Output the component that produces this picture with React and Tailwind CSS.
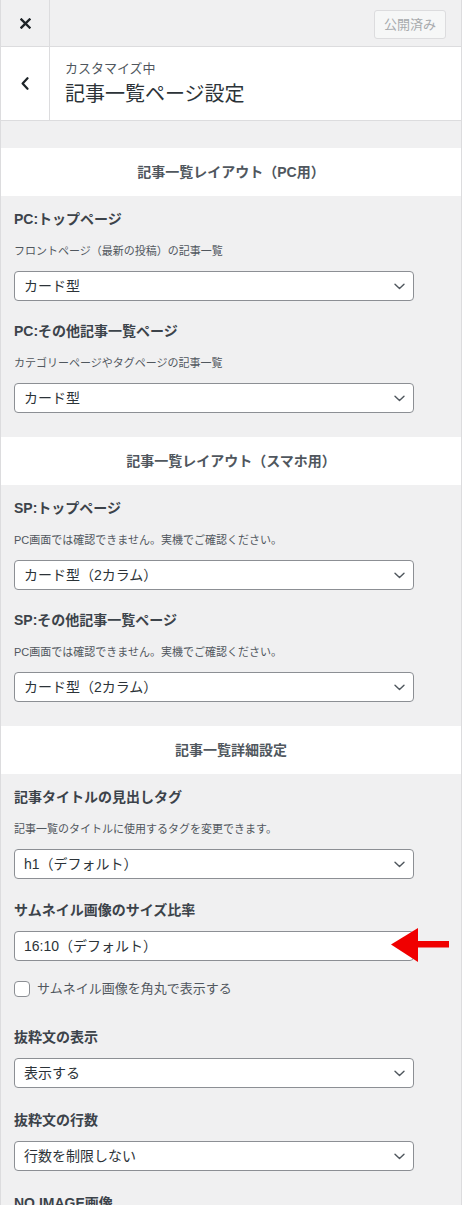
import React from "react";

const FONT = { fontFamily: '"Liberation Sans", "Noto Sans CJK JP", sans-serif' };

function Chevron() {
  return (
    <svg width="11" height="7" viewBox="0 0 11 7" fill="none">
      <path d="M1 1.2 L5.5 5.6 L10 1.2" stroke="#50575e" strokeWidth="1.4" strokeLinecap="round" strokeLinejoin="round" />
    </svg>
  );
}

function Select({ value, chevron = true }) {
  return (
    <div className="w-[400px] h-[30px] bg-white border border-[#8c8f94] rounded-[4px] flex items-center justify-between pl-[9px] pr-[8px] text-[14px] text-[#2c3338]">
      <span className="leading-[20px]">{value}</span>
      {chevron && <Chevron />}
    </div>
  );
}

function Label({ children }) {
  return <div className="h-[24px] leading-[24px] text-[14px] font-bold text-[#3c434a]">{children}</div>;
}

function Desc({ children }) {
  return <div className="mt-[11px] h-[18px] leading-[18px] text-[11px] text-[#50575e]">{children}</div>;
}

function Control({ label, desc, value, className = "" }) {
  return (
    <div className={className}>
      <Label>{label}</Label>
      {desc ? <Desc>{desc}</Desc> : null}
      <div className={desc ? "mt-[11px]" : "mt-[9px]"}>
        <Select value={value} />
      </div>
    </div>
  );
}

function Band({ children }) {
  return (
    <div className="h-[48px] bg-white flex items-center justify-center text-[14px] font-bold text-[#50575e]">
      {children}
    </div>
  );
}

export default function App() {
  return (
    <div className="w-[462px] min-h-[1205px] bg-[#f0f0f1] border-x border-[#dcdcde] overflow-hidden" style={FONT}>
      {/* top header */}
      <div className="h-[47px] flex border-b border-[#dcdcde]">
        <div className="w-[49px] border-r border-[#dcdcde] flex items-center justify-center">
          <svg width="11" height="11" viewBox="0 0 11 11">
            <path d="M1.5 1.5 L9.5 9.5 M9.5 1.5 L1.5 9.5" stroke="#1d2327" strokeWidth="2.4" strokeLinecap="square" />
          </svg>
        </div>
        <div className="flex-1 flex justify-end pr-[15px]">
          <div className="mt-[10px] h-[29px] w-[72px] border border-[#dcdcde] bg-[#f6f7f7] rounded-[3px] flex items-center justify-center text-[13px] text-[#a7aaad]">
            公開済み
          </div>
        </div>
      </div>

      {/* section header */}
      <div className="h-[74px] flex bg-white border-b border-[#dcdcde]">
        <div className="w-[49px] border-r border-[#dcdcde] flex items-center justify-center">
          <svg width="8" height="13" viewBox="0 0 8 13">
            <path d="M6.5 1.2 L1.6 6.5 L6.5 11.8" stroke="#1d2327" strokeWidth="2.2" fill="none" strokeLinecap="round" strokeLinejoin="round" />
          </svg>
        </div>
        <div className="flex flex-col justify-center pl-[15px] gap-[3px]">
          <div className="text-[13px] leading-[18px] text-[#50575e]">カスタマイズ中</div>
          <div className="text-[20px] leading-[26px] text-[#2c3338]">記事一覧ページ設定</div>
        </div>
      </div>

      <div className="h-[27px]" />

      {/* PC layout */}
      <Band>記事一覧レイアウト（PC用）</Band>
      <div className="px-[13px] pt-[11px] pb-[24px]">
        <Control label="PC:トップページ" desc="フロントページ（最新の投稿）の記事一覧" value="カード型" />
        <Control className="mt-[18px]" label="PC:その他記事一覧ページ" desc="カテゴリーページやタグページの記事一覧" value="カード型" />
      </div>

      {/* SP layout */}
      <Band>記事一覧レイアウト（スマホ用）</Band>
      <div className="px-[13px] pt-[11px] pb-[24px]">
        <Control label="SP:トップページ" desc="PC画面では確認できません。実機でご確認ください。" value="カード型（2カラム）" />
        <Control className="mt-[18px]" label="SP:その他記事一覧ページ" desc="PC画面では確認できません。実機でご確認ください。" value="カード型（2カラム）" />
      </div>

      {/* detail */}
      <Band>記事一覧詳細設定</Band>
      <div className="px-[13px] pt-[11px] pb-[24px]">
        <Control label="記事タイトルの見出しタグ" desc="記事一覧のタイトルに使用するタグを変更できます。" value="h1（デフォルト）" />

        <div className="mt-[19px]">
          <Label>サムネイル画像のサイズ比率</Label>
          <div className="mt-[9px] relative">
            <Select value="16:10（デフォルト）" chevron={false} />
            <svg className="absolute left-[377px] top-[-3px]" width="58" height="34" viewBox="0 0 58 34">
              <polygon points="0,16.5 27,0 27,34" fill="#f00000" />
              <rect x="26" y="13" width="32" height="6.5" fill="#f00000" />
            </svg>
          </div>
        </div>

        <div className="mt-[16px] h-[24px] flex items-center gap-[7px]">
          <div className="w-[16px] h-[16px] border border-[#8c8f94] rounded-[4px] bg-white" />
          <span className="text-[13px] text-[#50575e]">サムネイル画像を角丸で表示する</span>
        </div>

        <Control className="mt-[24px]" label="抜粋文の表示" value="表示する" />
        <Control className="mt-[20px]" label="抜粋文の行数" value="行数を制限しない" />
        <div className="mt-[20px]">
          <Label>NO IMAGE画像</Label>
        </div>
      </div>
    </div>
  );
}
